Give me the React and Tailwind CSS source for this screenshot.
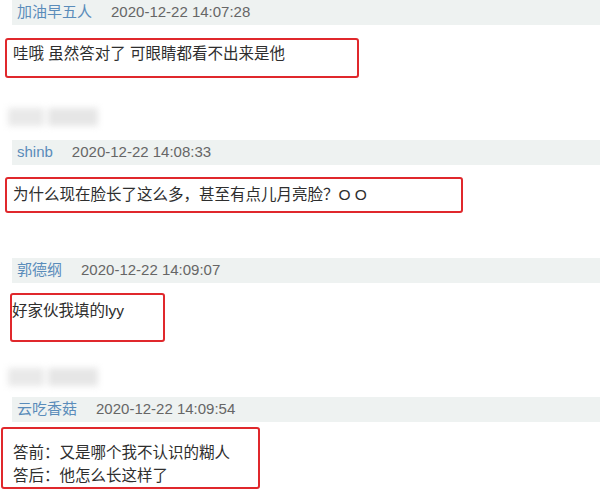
const font = { fontFamily: '"Liberation Sans", "Noto Sans CJK SC", sans-serif' };

function Header({ name, time, className }) {
  return (
    <div className={`ml-[12px] flex h-[25px] items-center bg-[#eef2f1] pl-[5px] text-[15px] ${className}`}>
      <span className="text-[#5a8cba]">{name}</span>
      <span className="ml-[19px] text-[#666666]">{time}</span>
    </div>
  );
}

function Blur({ className }) {
  return (
    <div className={`ml-[8px] flex h-[18px] gap-[4px] blur-[3px] ${className}`}>
      <div className="w-[36px] bg-[#e9e9e9]" />
      <div className="w-[50px] bg-[#e6e6e6]" />
    </div>
  );
}

export default function App() {
  return (
    <div className="flex h-[491px] w-[600px] flex-col overflow-hidden bg-white text-[#2e2e2e]" style={font}>
      <Header name="加油早五人" time="2020-12-22 14:07:28" />
      <div className="ml-[5px] mt-[13px] h-[40px] w-[354px] rounded-[3px] border-2 border-[#e0282c] pl-[6px] pt-[3px] text-[15.5px] leading-[22px]">
        哇哦 虽然答对了 可眼睛都看不出来是他
      </div>
      <Blur className="mt-[30px]" />
      <Header name="shinb" time="2020-12-22 14:08:33" className="mt-[14px]" />
      <div className="ml-[5px] mt-[12px] h-[36px] w-[458px] rounded-[3px] border-2 border-[#e0282c] pl-[6px] pt-[5px] text-[15.5px] leading-[22px]">
        为什么现在脸长了这么多，甚至有点儿月亮脸？O O
      </div>
      <Header name="郭德纲" time="2020-12-22 14:09:07" className="mt-[45px]" />
      <div className="ml-[10px] mt-[10px] h-[49px] w-[155px] rounded-[3px] border-2 border-[#e0282c] pt-[5px] text-[15.5px] leading-[22px]">
        好家伙我填的lyy
      </div>
      <Blur className="mt-[26px]" />
      <Header name="云吃香菇" time="2020-12-22 14:09:54" className="mt-[11px]" />
      <div className="ml-[1px] mt-[5px] h-[62px] w-[259px] rounded-[3px] border-2 border-[#e0282c] pl-[10px] pt-[12px] text-[15.5px] leading-[23px]">
        <div>答前：又是哪个我不认识的糊人</div>
        <div>答后：他怎么长这样了</div>
      </div>
    </div>
  );
}
